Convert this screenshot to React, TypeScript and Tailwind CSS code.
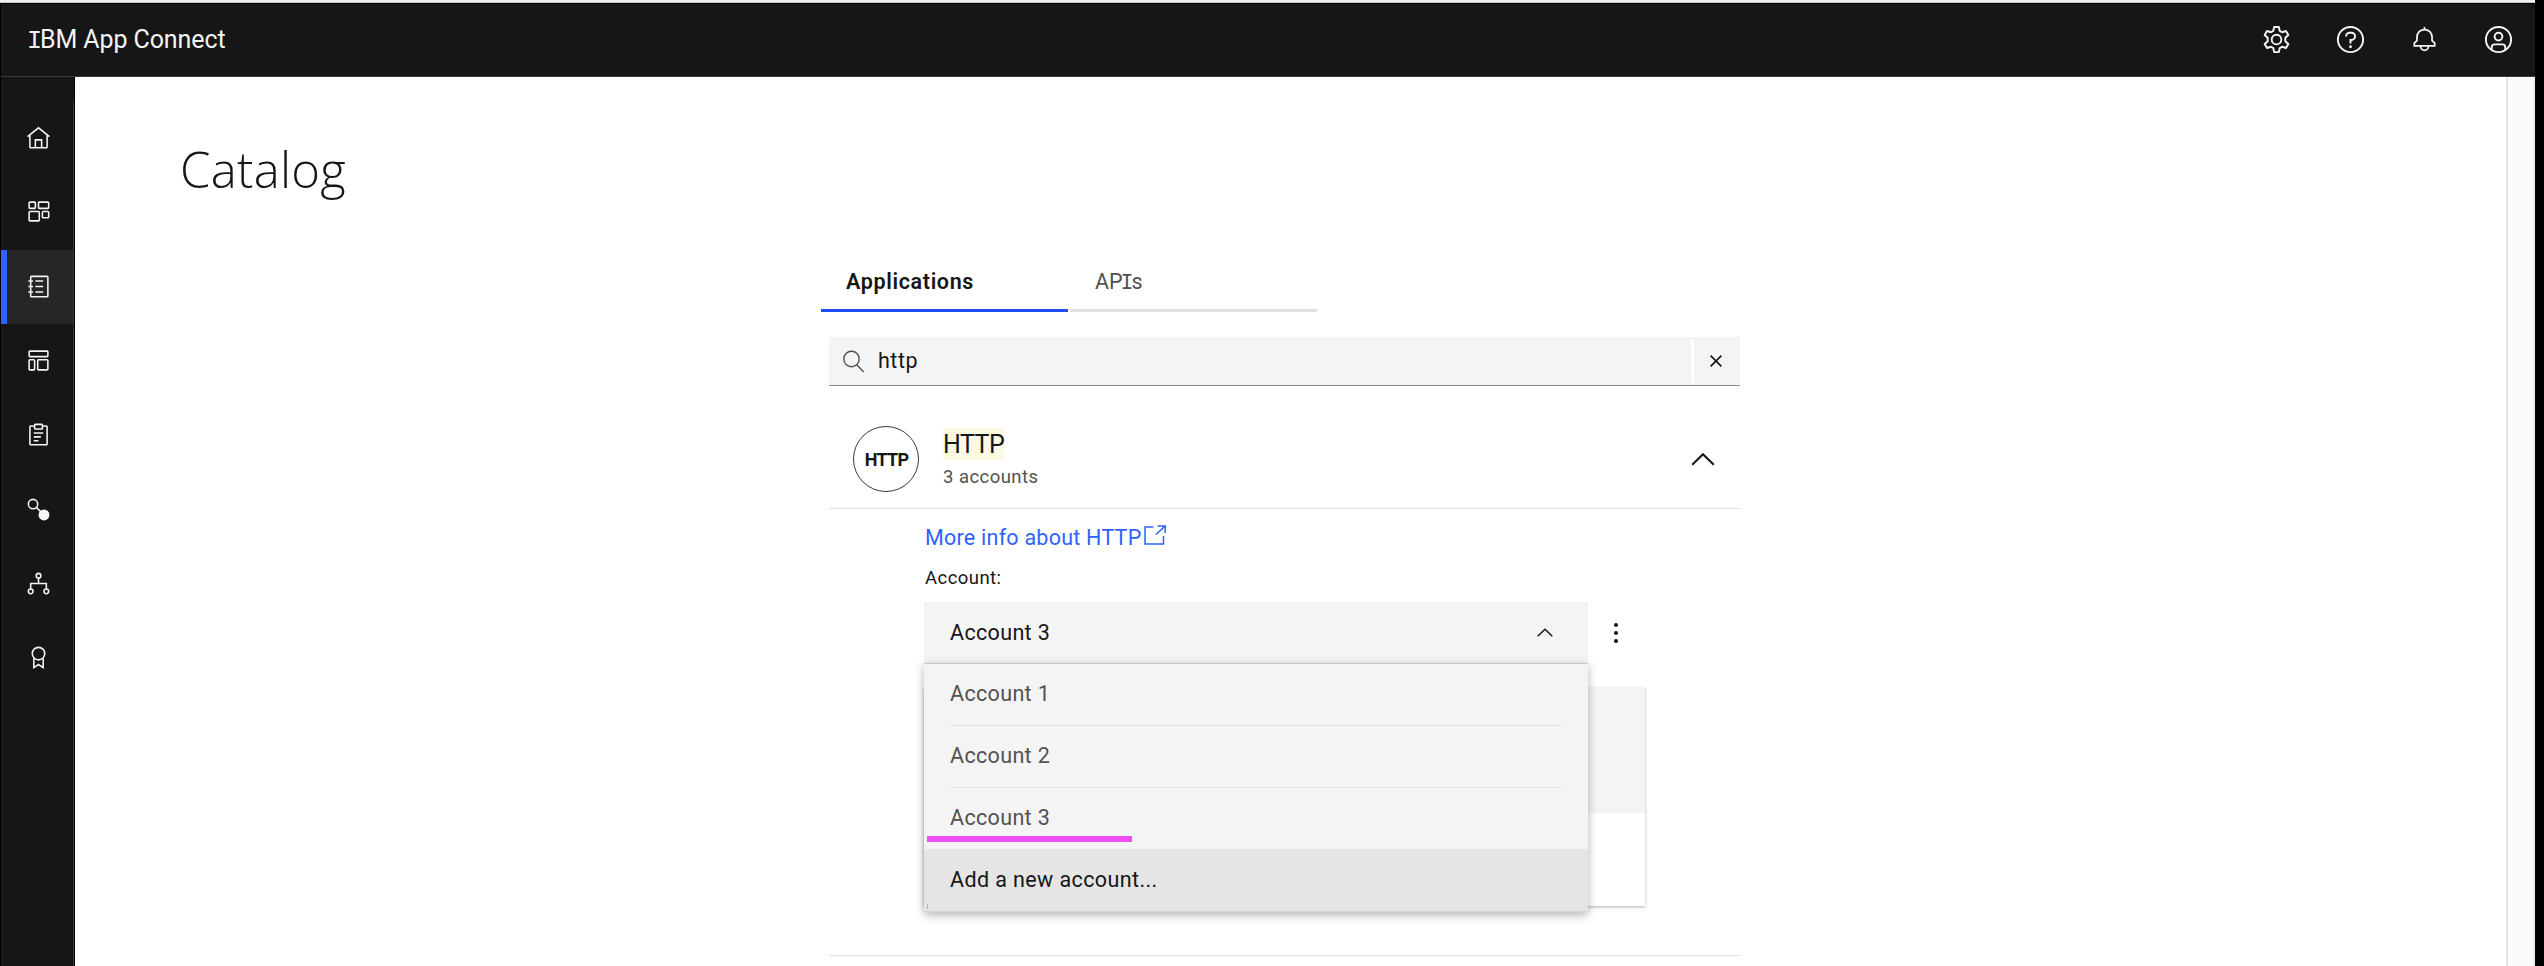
import React from "react";

type IconProps = { children: React.ReactNode; className: string; weight?: number };

function Icon({ children, className, weight = 2 }: IconProps) {
  return (
    <svg viewBox="0 0 32 32" className={className} fill="none" stroke="currentColor" strokeWidth={weight}>
      {children}
    </svg>
  );
}

const navItems: { name: string; active?: boolean; drawing: React.ReactNode }[] = [
  {
    name: "Home",
    drawing: (
      <>
        <path d="M2 15 16 3.6 30 15M5 12.6V28a1 1 0 0 0 1 1h20a1 1 0 0 0 1-1V12.6" />
        <path d="M12 29V19h8v10" />
      </>
    ),
  },
  {
    name: "Dashboard",
    drawing: (
      <>
        <rect x="4" y="4" width="8" height="8" rx="1" />
        <rect x="16" y="4" width="13" height="8" rx="1" />
        <rect x="4" y="16" width="13" height="12" rx="1" />
        <rect x="21" y="16" width="8" height="8" rx="1" />
      </>
    ),
  },
  {
    name: "Catalog",
    active: true,
    drawing: (
      <>
        <path d="M6 9V4a1 1 0 0 1 1-1h20a1 1 0 0 1 1 1v24a1 1 0 0 1-1 1H7a1 1 0 0 1-1-1V9" />
        <path d="M3 9h6M3 16h6M3 23h6M12 9h10M12 16h10M12 23h10" />
      </>
    ),
  },
  {
    name: "Templates",
    drawing: (
      <>
        <rect x="4" y="4" width="24" height="7" rx="1" />
        <rect x="4" y="15" width="7" height="13" rx="1" />
        <rect x="15" y="15" width="13" height="13" rx="1" />
      </>
    ),
  },
  {
    name: "Tasks",
    drawing: (
      <>
        <path d="M11 5H6a1 1 0 0 0-1 1v22a1 1 0 0 0 1 1h20a1 1 0 0 0 1-1V6a1 1 0 0 0-1-1h-5" />
        <rect x="11" y="3" width="10" height="6" rx="1" />
        <path d="M10 14h12M10 19h9M10 24h6" />
      </>
    ),
  },
  {
    name: "Connections",
    drawing: (
      <>
        <circle cx="9" cy="9" r="6" />
        <circle cx="23" cy="23" r="7" fill="currentColor" stroke="none" />
        <path d="m13 13 6 6" />
      </>
    ),
  },
  {
    name: "Agents",
    drawing: (
      <>
        <circle cx="16" cy="6" r="3" />
        <circle cx="6" cy="26" r="3" />
        <circle cx="26" cy="26" r="3" />
        <path d="M16 9v7M6 23v-7h20v7" />
      </>
    ),
  },
  {
    name: "Badges",
    drawing: (
      <>
        <circle cx="16" cy="11" r="8" />
        <path d="M10 17v12l6-4 6 4V17" />
      </>
    ),
  },
];

function SettingsIcon() {
  return (
    <Icon className="h-[31px] w-[31px]">
      <path
        strokeLinejoin="round"
        d="M13.6 3h4.8l.9 4.1 2.5 1.4 4-1.3 2.4 4.1-3.1 2.9v3.6l3.1 2.9-2.4 4.1-4-1.3-2.5 1.4-.9 4.1h-4.8l-.9-4.1-2.5-1.4-4 1.3-2.4-4.1 3.1-2.9v-3.6l-3.1-2.9 2.4-4.1 4 1.3 2.5-1.4z"
      />
      <circle cx="16" cy="16" r="5" />
    </Icon>
  );
}

function HelpIcon() {
  return (
    <Icon className="h-[31px] w-[31px]">
      <circle cx="16" cy="16" r="13" />
      <path d="M11.5 13v-.5a3.5 3.5 0 0 1 3.5-3.5h2a3.5 3.5 0 0 1 0 7.5h-1V20" />
      <circle cx="16" cy="23.5" r="1.5" fill="currentColor" stroke="none" />
    </Icon>
  );
}

function BellIcon() {
  return (
    <Icon className="h-[31px] w-[31px]" weight={1.8}>
      <path d="M16 3v3M5.5 22.600V19.800l2.700-2.700V13.500a7.800 7.800 0 0 1 15.600 0v3.600l2.700 2.700v2.800z" />
      <path d="M12 22.600v.6a4 4 0 0 0 8 0v-.6" />
    </Icon>
  );
}

function UserIcon() {
  return (
    <Icon className="h-[31px] w-[31px]">
      <circle cx="16" cy="16" r="13" />
      <circle cx="16" cy="13" r="4" />
      <path d="M9 26.500V24a3 3 0 0 1 3-3h8a3 3 0 0 1 3 3v2.500" />
    </Icon>
  );
}

/* Capital I with slab serifs, set inline among sans letters */
function SlabI({ className }: { className: string }) {
  return <span className={`font-['Liberation_Mono'] ${className}`}>I</span>;
}

function Header() {
  return (
    <header className="flex h-[74px] shrink-0 items-center justify-between border-t border-b border-t-black border-b-[#393939] bg-[#161616] pr-[21px] pl-[29px] text-[#f4f4f4]">
      <div className="pt-[1px] text-[25px] leading-[32px] tracking-[-0.100px]">
        <SlabI className="-ml-[3px] tracking-[-2px]" />
        BM App Connect
      </div>
      <div className="flex gap-[43.100px] pb-px">
        <SettingsIcon />
        <HelpIcon />
        <BellIcon />
        <UserIcon />
      </div>
    </header>
  );
}

function Sidebar() {
  return (
    <nav className="flex w-[74px] shrink-0 flex-col border-r border-black bg-[#161616] pt-[24px] text-[#f4f4f4]">
      {navItems.map((item) => (
        <a
          key={item.name}
          className={
            item.active
              ? "flex h-[74.300px] items-center border-r border-l-6 border-r-[#393939] border-l-[#2f62ff] bg-[#262626] pl-[19px]"
              : "flex h-[74.300px] items-center border-r border-r-[#393939] pb-px pl-[25px]"
          }
        >
          <Icon className="h-[25px] w-[25px]">{item.drawing}</Icon>
        </a>
      ))}
      <div className="flex-1 border-r border-r-[#393939]" />
    </nav>
  );
}

function Tabs() {
  return (
    <div className="mt-[57px] ml-[746px] flex h-[56px] gap-[2px] text-[21.500px]">
      <div className="flex w-[247px] items-center border-b-3 border-[#1f4af5] pl-[25px] font-semibold tracking-[0.650px] text-[#161616]">
        Applications
      </div>
      <div className="flex w-[247px] items-center border-b-3 border-[#e0e0e0] pl-[25px] text-[#525252]">
        <span>
          AP
          <SlabI className="-ml-[2px] tracking-[-2px]" />s
        </span>
      </div>
    </div>
  );
}

function SearchBar() {
  return (
    <div className="mt-[25px] flex h-[49px] items-center border-b border-[#8d8d8d] bg-[#f4f4f4] text-[#161616]">
      <svg viewBox="0 0 22 23" className="ml-[14px] h-[23px] w-[22px] text-[#525252]" fill="none" stroke="currentColor" strokeWidth="1.400">
        <circle cx="8.500" cy="9" r="7.700" />
        <path d="m14 15 6.700 7" />
      </svg>
      <div className="ml-[13px] flex-1 text-[21.500px] tracking-[0.500px]">http</div>
      <div className="h-[44px] w-[3px] bg-white" />
      <div className="flex w-[46px] justify-center pr-[3px]">
        <svg viewBox="0 0 12 12" className="h-[12px] w-[12px]" stroke="currentColor" strokeWidth="1.600">
          <path d="m.6.6 10.800 10.800M11.400.6.600 11.400" />
        </svg>
      </div>
    </div>
  );
}

function ConnectorHeader() {
  return (
    <div className="flex h-[123px] items-center border-b border-[#e0e0e0] pt-[24px] pr-[25px] pl-[24px]">
      <div className="flex h-[66px] w-[66px] items-center justify-center rounded-full border border-[#393939] text-[18px] font-bold tracking-[-0.700px] text-[#161616]">
        <span className="pl-px">HTTP</span>
      </div>
      <div className="ml-[24px] flex flex-1 flex-col items-start gap-[3px]">
        <div className="h-[32px] bg-[#fbf8e3] text-[25px] leading-[34px] tracking-[-0.500px] text-[#161616]">HTTP</div>
        <div className="text-[18.500px] leading-[28px] tracking-[0.450px] text-[#525252]">3 accounts</div>
      </div>
      <svg viewBox="0 0 24 14" className="h-[14px] w-[24px] text-[#161616]" fill="none" stroke="currentColor" strokeWidth="2.200">
        <path d="m1.200 12.800 10.800-10.600 10.800 10.600" />
      </svg>
    </div>
  );
}

function AccountMenu() {
  return (
    <div className="absolute top-[61px] left-0 z-10 h-[249px] w-[664px] border-t border-[#c8c8c8] bg-[#f4f4f4] tracking-[0.350px] text-[#525252] shadow-[0_3px_9px_rgba(0,0,0,0.300)]">
      <div className="mx-[26px] flex h-[62px] items-center border-b border-[#e0e0e0]">Account 1</div>
      <div className="mx-[26px] flex h-[62px] items-center border-b border-[#e0e0e0]">Account 2</div>
      <div className="mx-[26px] flex h-[61px] items-center">Account 3</div>
      <div className="flex h-[63px] items-center border-b border-[#d4d4d4] bg-[#e5e5e5] px-[26px] tracking-[0.400px] text-[#161616]">
        Add a new account...
      </div>
      <div className="absolute top-[172px] left-[3px] h-[6px] w-[205px] bg-[#ee4ff5]" />
      <div className="absolute top-[240px] left-[3px] h-[5px] w-px bg-[#d3a0da]" />
    </div>
  );
}

function AccountDetails() {
  return (
    <div className="pt-[14px] pl-[95px] text-[21.500px]">
      <a className="flex h-[30px] items-start pl-px leading-[30px] tracking-[0.240px] text-[#2f62ff]">
        More info about HTTP
        <svg viewBox="0 0 22 20" className="mt-[2px] ml-[2px] h-[20px] w-[22px]" fill="none" stroke="currentColor" strokeWidth="1.500">
          <path d="M9.500 2H1v17h18.500v-8" />
          <path d="M13.500.9h7.700v7.200M21 1.100 12 9.500" />
        </svg>
      </a>
      <div className="mt-[12px] pl-px text-[18.500px] leading-[26px] tracking-[0.450px] text-[#161616]">Account:</div>
      <div className="mt-[11px] flex items-center">
        <div className="relative flex h-[61px] w-[664px] items-center justify-between bg-[#f4f4f4] pr-[35px] pl-[26px] tracking-[0.350px] text-[#161616]">
          <span className="pt-px">Account 3</span>
          <svg viewBox="0 0 16 9" className="h-[9px] w-[16px]" fill="none" stroke="currentColor" strokeWidth="1.500">
            <path d="m.7 8.300 7.300-7.100 7.300 7.100" />
          </svg>
          <AccountMenu />
        </div>
        <svg viewBox="0 0 4 20" className="ml-[26px] h-[20px] w-[4px] fill-[#161616]">
          <circle cx="2" cy="2" r="2" />
          <circle cx="2" cy="10" r="2" />
          <circle cx="2" cy="18" r="2" />
        </svg>
      </div>
      <div className="mt-[25px] h-[218px] w-[721px] bg-white shadow-[0_1px_3px_rgba(0,0,0,0.300)]">
        <div className="h-[125px] bg-[#f4f4f4]" />
      </div>
    </div>
  );
}

export default function App() {
  return (
    <div className="flex h-[966px] w-[2544px] flex-col overflow-hidden bg-black font-['Roboto',sans-serif]">
      <div className="h-[3px] w-[2535px] shrink-0 border-b border-[#c6c6c6] bg-[#f0f0f0]" />
      <div className="flex w-[2535px] flex-1 flex-col pl-px">
        <Header />
        <div className="flex flex-1">
          <Sidebar />
          <main className="flex-1 bg-white">
            <h1 className="ml-[105px] pt-[62px] font-['Open_Sans',sans-serif] text-[49px] leading-[60px] font-light tracking-[0.300px] text-[#161616]">
              Catalog
            </h1>
            <Tabs />
            <section className="ml-[754px] w-[911px]">
              <SearchBar />
              <ConnectorHeader />
              <AccountDetails />
              <div className="mt-[49px] border-t border-[#e0e0e0]" />
            </section>
          </main>
          <div className="w-[29px] border-r-2 border-l-2 border-r-[#eeeeee] border-l-[#e4e4e4] bg-[#fafafa]" />
        </div>
      </div>
    </div>
  );
}
